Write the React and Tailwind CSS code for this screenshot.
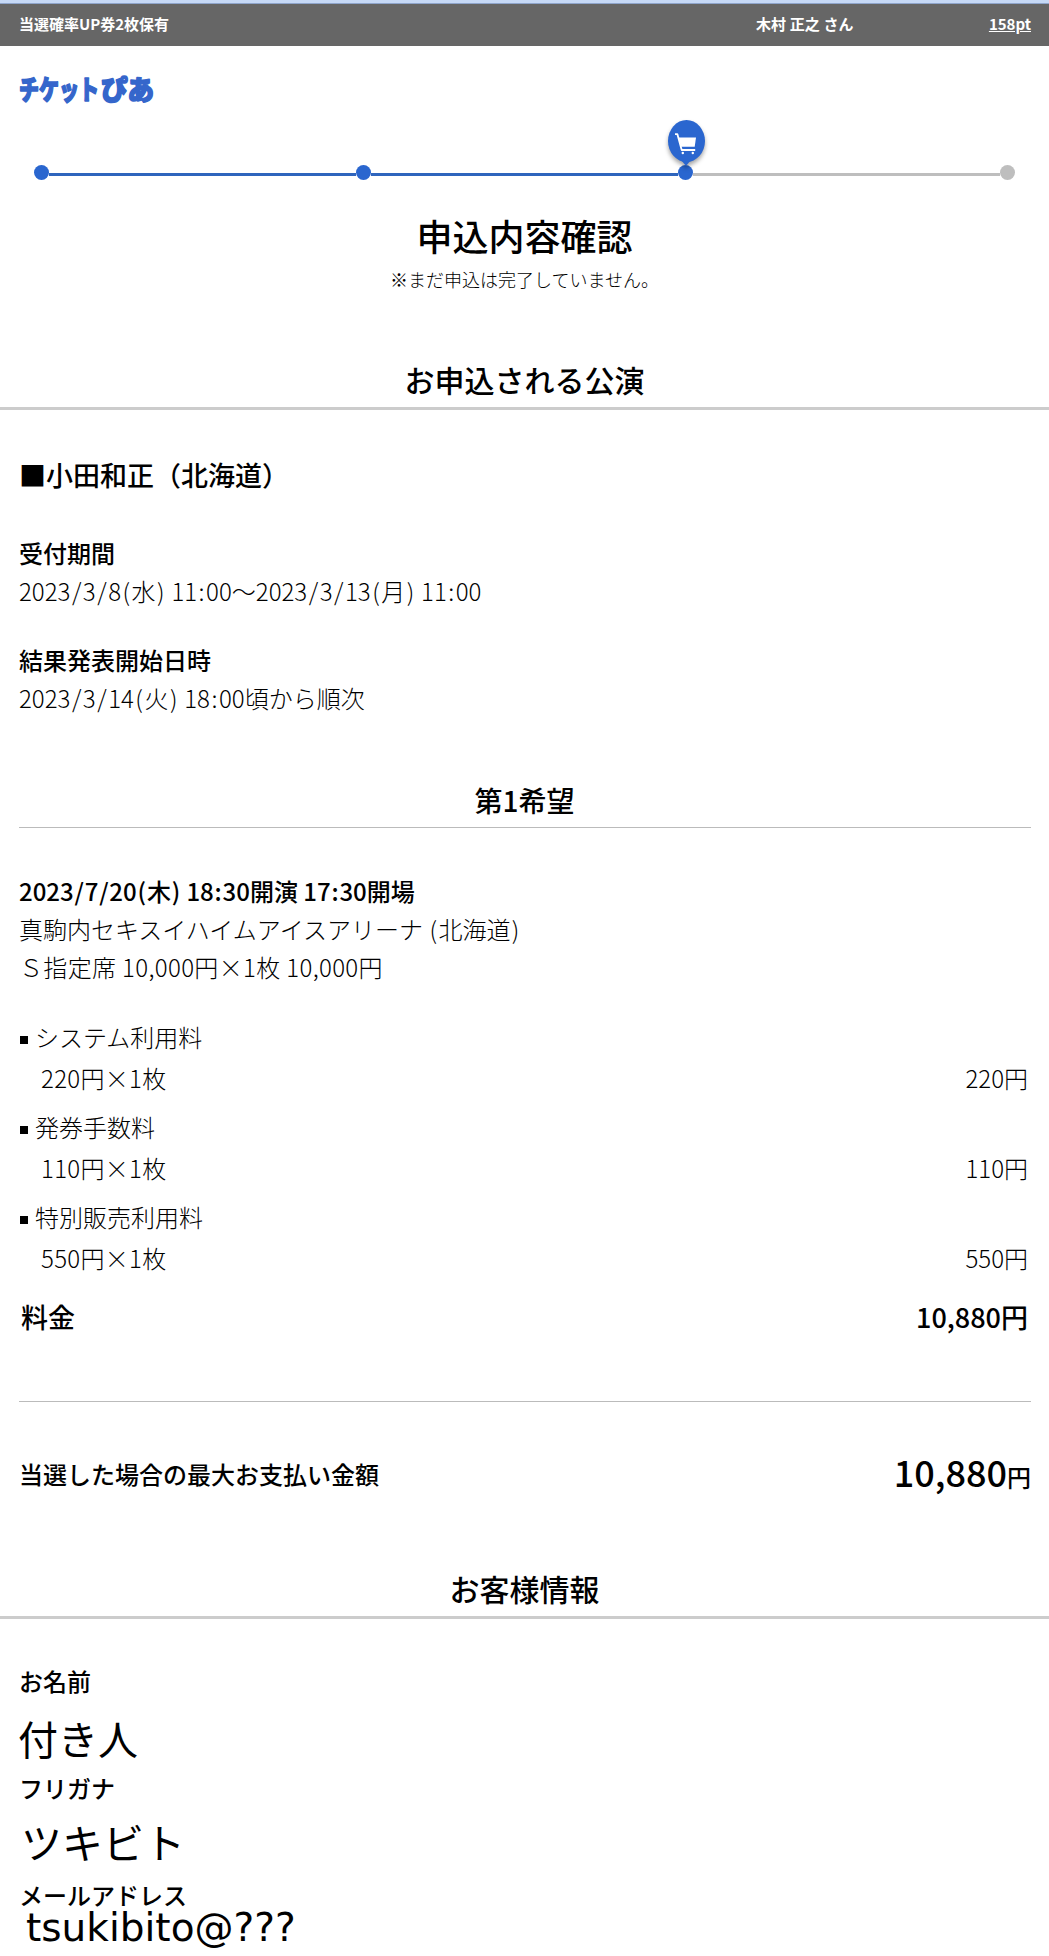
import React from 'react';

const fees = [
  { name: 'システム利用料', detail: '220円×1枚', price: '220円' },
  { name: '発券手数料', detail: '110円×1枚', price: '110円' },
  { name: '特別販売利用料', detail: '550円×1枚', price: '550円' },
];

const Logo = () => (
  <svg className="block h-[48px] w-[150px]" viewBox="0 0 150 48" role="img" aria-label="チケットぴあ">
    <g fill="#3566cb" stroke="#3566cb" strokeWidth="1.6" strokeLinejoin="round" fontSize="27" fontWeight="900">
      <text x="1" y="35" textLength="80" lengthAdjust="spacingAndGlyphs">チケット</text>
      <text x="83" y="35" textLength="53" lengthAdjust="spacingAndGlyphs">ぴあ</text>
    </g>
  </svg>
);

const CartPin = () => (
  <svg
    className="absolute -top-[45px] -left-[14px] h-[52px] w-[44px] drop-shadow-[0_3px_2px_rgba(0,0,0,0.35)]"
    viewBox="0 0 44 52"
  >
    <path d="M17 40h10l-5 6z" fill="#2a66cf" />
    <ellipse cx="22.5" cy="21" rx="18.5" ry="21" fill="#2a66cf" />
    <path d="M11 14.2h2.400l4.300 15.800h13.500" fill="none" stroke="#fff" strokeWidth="1.8" strokeLinejoin="round" />
    <path d="M14.500 17.500h17.500l-1.300 9.300h-13.700z" fill="#fff" />
    <circle cx="18.800" cy="33" r="1.200" fill="#fff" />
    <circle cx="28.800" cy="33" r="1.200" fill="#fff" />
  </svg>
);

const Dot = ({ done, current }) => (
  <div className={`relative h-[15px] w-[15px] rounded-full ${done ? 'bg-[#2a66cf]' : 'bg-[#bebebe]'}`}>
    {current && <CartPin />}
  </div>
);

const Bar = ({ done }) => (
  <div className={`mt-[4px] h-[3px] flex-1 ${done ? 'bg-[#2f65bd]' : 'bg-[#bebebe]'}`} />
);

// Gives slashes, brackets and colons a little more room on both sides
const DateText = ({ children, spacing = 'px-[1.5px]' }) =>
  children.split(/([/():])/).map((part, idx) => (
    <span key={idx} className={idx % 2 ? spacing : undefined}>{part}</span>
  ));

const SectionTitle = ({ children }) => (
  <h2 className="border-b-[3px] border-[#ccc] pb-2 text-center text-[30px] leading-10 font-medium">{children}</h2>
);

const App = () => {
  return (
    <div className="h-[1956px] overflow-hidden bg-white font-['Noto_Sans_CJK_JP',sans-serif] text-2xl text-black">
      <div className="h-1 border-b border-[#8fa5cb] bg-[#c6d9f6]" />
      <header className="flex h-[42px] items-center bg-[#666] pr-[18px] pb-[2px] pl-[19px] text-[15px] font-bold text-white">
        <span className="w-[737px]">当選確率UP券2枚保有</span>
        <span className="tracking-[0.1px]">木村 正之 さん</span>
        <a href="#" className="ml-auto underline">158pt</a>
      </header>

      <div className="mt-[19px] pl-[18px]">
        <Logo />
      </div>

      <div className="mt-[52px] flex items-center px-[34px]">
        <Dot done />
        <Bar done />
        <Dot done />
        <Bar done />
        <Dot done current />
        <Bar />
        <Dot />
      </div>

      <h1 className="mt-[31px] text-center text-4xl leading-[48px] font-medium">申込内容確認</h1>
      <p className="mt-2 text-center text-lg leading-6 font-light">※まだ申込は完了していません。</p>

      <div className="mt-[68px]">
        <SectionTitle>お申込される公演</SectionTitle>
      </div>

      <section className="pr-[18px] pl-[19px]">
        <h3 className="mt-[45px] text-[27px] leading-10 font-medium">■小田和正（北海道）</h3>
        <dl className="mt-[39px] leading-[38px]">
          <dt className="font-medium">受付期間</dt>
          <dd className="font-light">
            <DateText>2023/3/8(水) 11:00～2023/3/13(月) 11:00</DateText>
          </dd>
          <dt className="mt-[31px] font-medium">結果発表開始日時</dt>
          <dd className="font-light">
            <DateText>2023/3/14(火) 18:00頃から順次</DateText>
          </dd>
        </dl>

        <h3 className="mt-[63px] border-b border-[#bbb] pr-px pb-[7px] text-center text-[28px] leading-10 font-medium">
          第1希望
        </h3>
        <div className="mt-[44px] leading-[38px] font-light">
          <p className="font-medium">
            <DateText spacing="px-[0.8px]">2023/7/20(木) 18:30開演 17:30開場</DateText>
          </p>
          <p>
            <DateText spacing="px-[1.3px]">真駒内セキスイハイムアイスアリーナ (北海道)</DateText>
          </p>
          <p className="tracking-[0.35px]">Ｓ指定席 10,000円×1枚 10,000円</p>
        </div>

        <ul className="mt-[31px] flex flex-col gap-[9px] font-light">
          {fees.map((fee) => (
            <li key={fee.name}>
              <div className="flex items-center leading-10">
                <span className="mt-[5px] mr-[7px] ml-px h-2 w-2 bg-black" />
                {fee.name}
              </div>
              <div className="flex justify-between pr-[3px] pl-[22px] leading-[41px]">
                <span className="tracking-[0.3px]">{fee.detail}</span>
                <span>{fee.price}</span>
              </div>
            </li>
          ))}
        </ul>
        <div className="mt-[19px] flex justify-between pr-[3px] pl-[2px] text-[27px] leading-10 font-medium">
          <span>料金</span>
          <span>10,880円</span>
        </div>

        <div className="mt-[64px] border-t border-[#bbb] pt-12">
          <div className="flex h-12 items-center justify-between font-medium">
            <span>当選した場合の最大お支払い金額</span>
            <span className="flex items-baseline leading-[48px]">
              <span className="text-4xl leading-[48px]">10,880</span>円
            </span>
          </div>
        </div>
      </section>

      <div className="mt-[70px]">
        <SectionTitle>お客様情報</SectionTitle>
      </div>

      <section className="pr-[18px] pl-[19px]">
        <h4 className="mt-[43px] leading-[38px] font-medium">お名前</h4>
        <p className="-ml-px h-[69px] pt-1 text-[40px] leading-[69px]">付き人</p>
        <h4 className="leading-[38px] font-medium">フリガナ</h4>
        <p className="h-[69px] pl-[2px] text-[41px] leading-[69px]">ツキビト</p>
        <h4 className="leading-[38px] font-medium">メールアドレス</h4>
        <p className="pl-[7px] font-['DejaVu_Sans',sans-serif] text-[39px] leading-[28px]">tsukibito@???</p>
      </section>
    </div>
  );
};

export default App;
